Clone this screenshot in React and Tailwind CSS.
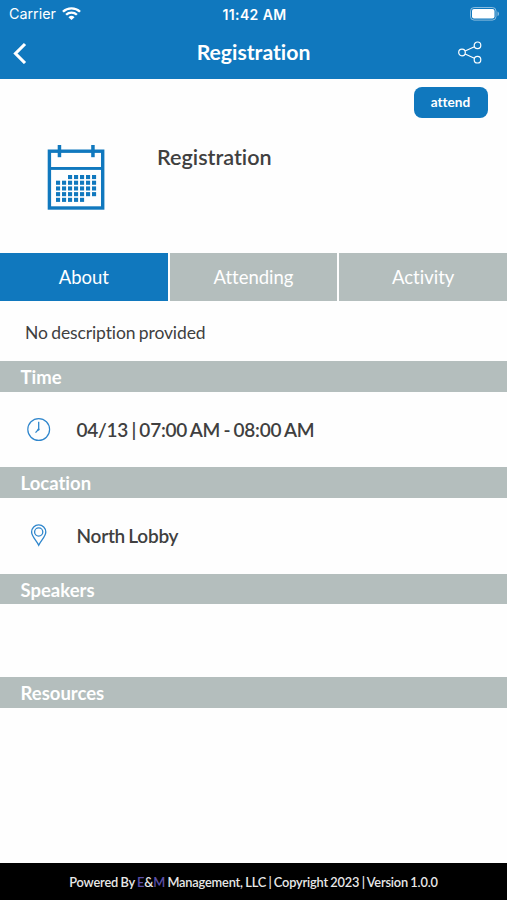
import clsx from 'clsx'

const TABS = ['About', 'Attending', 'Activity']

// first and last filled column of each week row
const WEEKS = [[2, 6], [0, 6], [0, 6], [0, 6], [0, 4]]
const DAYS = [0, 1, 2, 3, 4, 5, 6]

function WifiIcon() {
  return (
    <svg width="19" height="14" viewBox="0 0 18 14" preserveAspectRatio="none" fill="none" stroke="white" strokeWidth="2.3">
      <path d="M0.9 4.7a11.6 11.6 0 0 1 16.2 0" />
      <path d="M3.9 7.8a7.3 7.3 0 0 1 10.2 0" />
      <path d="M9 13.1 6.1 10.2a4.1 4.1 0 0 1 5.8 0z" fill="white" stroke="none" />
    </svg>
  )
}

function BatteryIcon() {
  return (
    <svg width="30" height="14" viewBox="0 0 30 14" fill="none">
      <rect x="0.5" y="0.5" width="25.5" height="12.6" rx="3.6" stroke="white" strokeOpacity="0.5" />
      <rect x="2" y="2" width="22.5" height="9.6" rx="2" fill="white" />
      <path d="M27.5 4.5c2 .7 2 3.9 0 4.6z" fill="white" fillOpacity="0.5" />
    </svg>
  )
}

function ShareIcon() {
  return (
    <svg width="26" height="24" viewBox="0 0 26 24" fill="none" stroke="white" strokeWidth="1.2">
      <circle cx="5" cy="11.5" r="3.3" />
      <circle cx="20.5" cy="4.3" r="3.3" />
      <circle cx="20.5" cy="18.7" r="3.3" />
      <path d="M8.1 10 17.4 5.8M8.1 13l9.3 4.2" />
    </svg>
  )
}

function CalendarIcon() {
  return (
    <svg width="58" height="66" viewBox="0 0 58 66" className="shrink-0" fill="#1078be">
      <rect x="2.4" y="6.2" width="53.3" height="56.8" fill="none" stroke="#1078be" strokeWidth="3.4" />
      <rect x="2" y="22" width="54" height="2.9" />
      <rect x="10.7" y="0" width="3.5" height="12.2" />
      <rect x="44.2" y="0" width="3.5" height="12.2" />
      {WEEKS.map(([from, to], row) =>
        DAYS.filter((col) => col >= from && col <= to).map((col) => (
          <rect key={`${row}-${col}`} x={9 + col * 6} y={30 + row * 5.7} width="4.1" height="4.1" />
        ))
      )}
    </svg>
  )
}

function ClockIcon() {
  return (
    <svg width="24" height="24" viewBox="0 0 24 24" fill="none" stroke="#2f86cc">
      <circle cx="11.7" cy="11.5" r="10.9" strokeWidth="1.2" />
      <path d="M11.7 3.8v7.4l-3.2 3.4" strokeWidth="1.3" />
      <circle cx="11.5" cy="11.6" r="1.1" fill="#2f86cc" stroke="none" />
    </svg>
  )
}

function PinIcon() {
  return (
    <svg width="24" height="24" viewBox="0 0 24 24" fill="none" stroke="#2f86cc" strokeWidth="1.3">
      <path d="M11.7 21.2C9.7 16.7 4.6 12.500 4.600 8a7.100 7.100 0 0 1 14.200 0C18.800 12.500 13.700 16.700 11.700 21.200z" />
      <circle cx="11.7" cy="8" r="4.1" />
    </svg>
  )
}

function SectionTitle({ children }) {
  return (
    <h2 className="h-[30.6px] bg-[#b4bebd] pl-[20.5px] text-[18.5px] leading-[32px] font-bold text-white">
      {children}
    </h2>
  )
}

function DetailRow({ icon, children }) {
  return (
    <div className="flex h-[75.6px] items-center pl-[27px] text-[19px] font-semibold">
      {icon}
      <span className="ml-[25.5px] pt-px tracking-[-0.25px] [word-spacing:-0.06em]">{children}</span>
    </div>
  )
}

export default function App() {
  return (
    <div className="flex h-[900px] w-[507px] flex-col overflow-hidden bg-[#fefefe] font-['Lato',sans-serif] text-[#404040] [font-variant-ligatures:none]">
      <header className="h-[79px] shrink-0 bg-[#1078be] text-white">
        <div className="grid h-7 grid-cols-3 items-center pr-[7px] pl-[9px] font-['Inter',sans-serif] text-[14.3px]">
          <div className="flex items-center gap-[6px]">
            <span>Carrier</span>
            <WifiIcon />
          </div>
          <span className="text-center text-[14px] font-semibold tracking-[0.4px]">11:42 AM</span>
          <div className="flex justify-end">
            <BatteryIcon />
          </div>
        </div>
        <div className="grid h-[49px] grid-cols-[60px_1fr_60px] items-center">
          <button className="pl-[13px]" aria-label="Back">
            <svg width="14" height="22" viewBox="0 0 14 22" fill="none" stroke="white" strokeWidth="3.1">
              <path d="M12 2 2.5 11.5l9.5 9.5" />
            </svg>
          </button>
          <h1 className="text-center text-[21.2px] font-bold">Registration</h1>
          <button className="pl-[10px]" aria-label="Share">
            <ShareIcon />
          </button>
        </div>
      </header>

      <section className="h-[174px] shrink-0">
        <div className="flex justify-end pt-2 pr-[19.5px]">
          <button className="h-[31px] w-[74px] rounded-lg bg-[#1078be] text-[13.6px] font-bold text-white">attend</button>
        </div>
        <div className="flex pt-[27px] pl-[47px]">
          <CalendarIcon />
          <p className="ml-[52px] text-[21.6px] leading-[24px] font-semibold">Registration</p>
        </div>
      </section>

      <nav className="grid h-12 shrink-0 grid-cols-3 gap-[2px]">
        {TABS.map((tab) => (
          <button
            key={tab}
            className={clsx('pt-px text-[18.5px] text-white', tab === 'About' ? 'bg-[#1078be]' : 'bg-[#b4bebd]')}
          >
            {tab}
          </button>
        ))}
      </nav>

      <main className="flex-1">
        <p className="h-[60.2px] pl-[25px] text-[17.5px] leading-[63px] tracking-[-0.12px] [word-spacing:-0.05em]">
          No description provided
        </p>
        <SectionTitle>Time</SectionTitle>
        <DetailRow icon={<ClockIcon />}>04/13 | 07:00 AM - 08:00 AM</DetailRow>
        <SectionTitle>Location</SectionTitle>
        <DetailRow icon={<PinIcon />}>North Lobby</DetailRow>
        <SectionTitle>Speakers</SectionTitle>
        <div className="h-[73.2px]" />
        <SectionTitle>Resources</SectionTitle>
      </main>

      <footer className="h-[37px] shrink-0 bg-black text-center text-[12.8px] leading-[38px] font-semibold tracking-[-0.18px] whitespace-nowrap text-[#e8e8e8] [word-spacing:-0.05em]">
        Powered By <span className="text-[#5b4fa8]">E</span>&amp;<span className="text-[#5b4fa8]">M</span> Management, LLC | Copyright 2023 | Version 1.0.0
      </footer>
    </div>
  )
}
